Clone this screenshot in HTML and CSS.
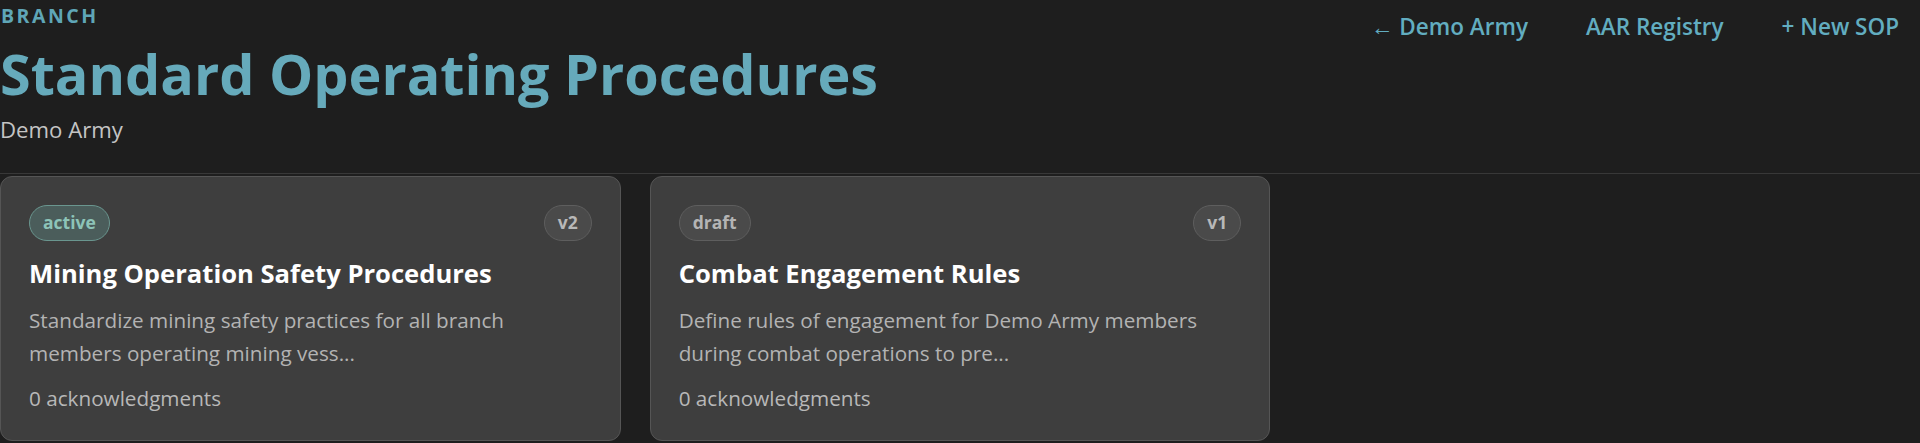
FILE: index.html
```html
<!DOCTYPE html>
<html lang="en">
<head>
<meta charset="utf-8">
<title>Standard Operating Procedures</title>
<link rel="stylesheet" href="styles.css">
</head>
<body>
<header class="page-header">
  <div class="heading">
    <div class="eyebrow">BRANCH</div>
    <h1 class="title">Standard Operating Procedures</h1>
    <div class="subtitle">Demo Army</div>
  </div>
  <nav class="nav">
    <a class="nav-link" href="#">&larr; Demo Army</a>
    <a class="nav-link" href="#">AAR Registry</a>
    <a class="nav-link" href="#">+ New SOP</a>
  </nav>
</header>
<main class="sop-grid">
  <article class="sop-card">
    <div class="card-top">
      <span class="badge badge-active">active</span>
      <span class="badge badge-version">v2</span>
    </div>
    <h2 class="card-title">Mining Operation Safety Procedures</h2>
    <p class="card-desc">Standardize mining safety practices for all branch members operating mining vess...</p>
    <div class="card-meta">0 acknowledgments</div>
  </article>
  <article class="sop-card">
    <div class="card-top">
      <span class="badge badge-draft">draft</span>
      <span class="badge badge-version">v1</span>
    </div>
    <h2 class="card-title">Combat Engagement Rules</h2>
    <p class="card-desc">Define rules of engagement for Demo Army members during combat operations to pre...</p>
    <div class="card-meta">0 acknowledgments</div>
  </article>
</main>
</body>
</html>
```
FILE: styles.css
```css
* { box-sizing: border-box; }

body {
  margin: 0;
  background: #1e1e1e;
  font-family: "Open Sans", "Noto Sans", sans-serif;
  color: #d0d0d0;
}

.page-header {
  display: flex;
  justify-content: space-between;
  align-items: flex-start;
  padding: 3px 21px 29px 0;
  border-bottom: 1px solid #383838;
}

.eyebrow {
  font-size: 19.5px;
  line-height: 26px;
  font-weight: 700;
  letter-spacing: 2.5px;
  color: #5fa6b7;
  padding-left: 1px;
}

.title {
  margin: 9px 0 0;
  font-size: 55.7px;
  line-height: 70px;
  font-weight: 700;
  color: #66aabb;
}

.subtitle {
  margin-top: 8px;
  font-size: 22.2px;
  line-height: 28px;
  color: #c4c4c4;
}

.nav {
  display: flex;
  gap: 58px;
  margin-top: 9px;
}

.nav-link {
  font-size: 22.5px;
  line-height: 30px;
  font-weight: 600;
  color: #62adc0;
  text-decoration: none;
}

.sop-grid {
  display: grid;
  grid-template-columns: repeat(3, 1fr);
  gap: 29px;
  margin-top: 2px;
  align-items: start;
}

.sop-card {
  background: #3e3e3e;
  border: 1px solid #555555;
  border-radius: 12px;
  padding: 28px;
}

.card-top {
  display: flex;
  justify-content: space-between;
  align-items: center;
}

.badge {
  display: inline-block;
  font-size: 17.5px;
  line-height: 22px;
  font-weight: 700;
  padding: 5px 13px 7px;
  border-radius: 999px;
  border: 1px solid #5e5e5e;
  background: #4a4a4a;
  color: #b4b4b4;
}

.badge-active {
  background: #4b5d5b;
  border-color: #6a968f;
  color: #8dc4b8;
}

.badge-version {
  color: #b8b8b8;
}

.card-title {
  margin: 17px 0 0;
  font-size: 25.6px;
  line-height: 32px;
  font-weight: 700;
  color: #ffffff;
}

.card-desc {
  margin: 14px 0 0;
  font-size: 20.7px;
  line-height: 33.3px;
  color: #b3b3b3;
}

.card-meta {
  margin-top: 13px;
  font-size: 20.7px;
  line-height: 28px;
  color: #b8b8b8;
}
```
